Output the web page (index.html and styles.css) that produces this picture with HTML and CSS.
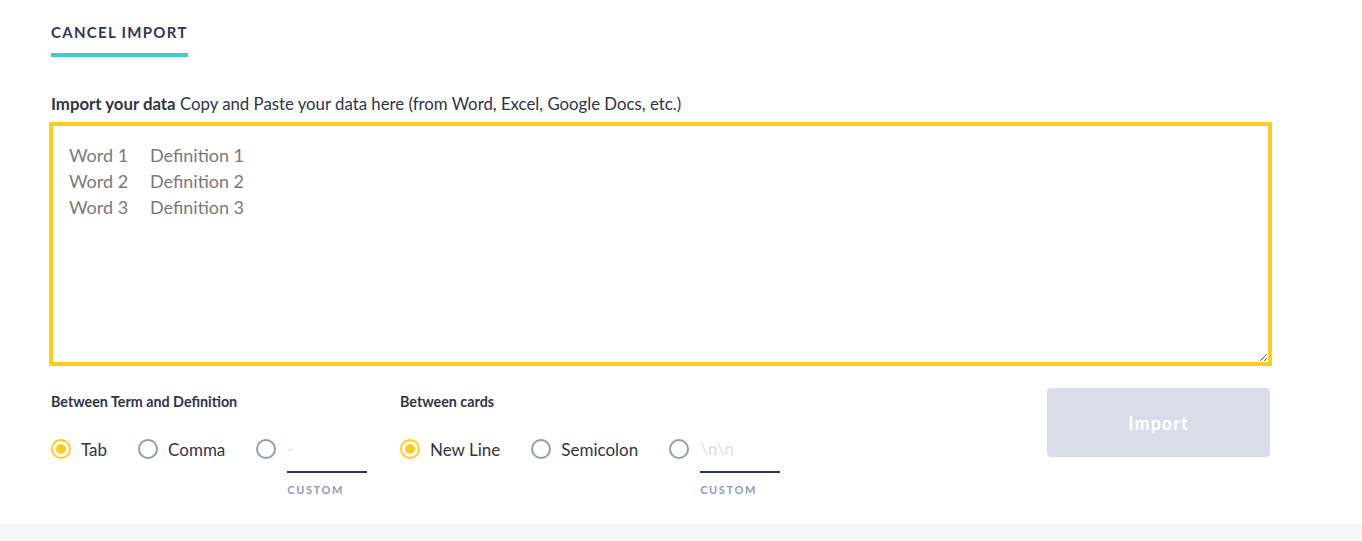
FILE: index.html
```html
<!DOCTYPE html>
<html lang="en">
<head>
<meta charset="utf-8">
<title>Import</title>
<link rel="stylesheet" href="styles.css">
</head>
<body>
<div class="page">
  <main class="panel">
    <div class="tabs">
      <a class="tab-link">CANCEL IMPORT</a>
    </div>
    <label class="intro" for="data"><strong>Import your data</strong> Copy and Paste your data here (from Word, Excel, Google Docs, etc.)</label>
    <textarea id="data" class="data-box" placeholder="Word 1&#9;Definition 1&#10;Word 2&#9;Definition 2&#10;Word 3&#9;Definition 3"></textarea>

    <div class="options">
      <div class="group group-term">
        <div class="group-title">Between Term and Definition</div>
        <div class="choices">
          <label class="choice"><span class="radio checked"></span><span class="choice-text">Tab</span></label>
          <label class="choice"><span class="radio"></span><span class="choice-text">Comma</span></label>
          <div class="choice custom-choice">
            <span class="radio"></span>
            <div class="custom">
              <input class="custom-input" type="text" placeholder="-">
              <span class="custom-label">CUSTOM</span>
            </div>
          </div>
        </div>
      </div>
      <div class="group group-cards">
        <div class="group-title">Between cards</div>
        <div class="choices">
          <label class="choice"><span class="radio checked"></span><span class="choice-text">New Line</span></label>
          <label class="choice"><span class="radio"></span><span class="choice-text">Semicolon</span></label>
          <div class="choice custom-choice">
            <span class="radio"></span>
            <div class="custom">
              <input class="custom-input" type="text" placeholder="\n\n">
              <span class="custom-label">CUSTOM</span>
            </div>
          </div>
        </div>
      </div>
      <div class="actions">
        <button class="import-btn" type="button" disabled>Import</button>
      </div>
    </div>
  </main>
  <footer class="footer"></footer>
</div>
</body>
</html>
```

FILE: styles.css
```css
* { box-sizing: border-box; }
html, body {
  margin: 0;
  padding: 0;
  background: #ffffff;
  font-family: "Lato", "Noto Sans", sans-serif;
  color: #2e3856;
}
.page {
  min-height: 541px;
  display: flex;
  flex-direction: column;
}
.panel {
  padding: 22px 92px 26px 51px;
  background: #ffffff;
}
.footer {
  flex: 1;
  background: #f6f7fb;
}
.tabs {
  display: flex;
}
.tab-link {
  font-size: 15px;
  line-height: 20px;
  font-weight: 700;
  letter-spacing: 1.3px;
  color: #2e3856;
  padding-bottom: 11px;
  border-bottom: 4px solid #3ccfcf;
}
.intro {
  display: block;
  margin-top: 35px;
  font-size: 16.8px;
  line-height: 24px;
  color: #303545;
}
.intro strong { font-weight: 700; }
.data-box {
  display: block;
  width: 100%;
  height: 240px;
  margin-top: 8px;
  border: 2px solid #ffcd1f;
  box-shadow: 0 0 0 2px #ffcd1f;
  border-radius: 0;
  outline: none;
  padding: 16px;
  font-family: "Lato", "Noto Sans", sans-serif;
  font-size: 18px;
  line-height: 26px;
  color: #303545;
  tab-size: 81px;
  -moz-tab-size: 81px;
  resize: vertical;
  background: #fff;
}
.data-box::placeholder {
  color: #7a7a7a;
  opacity: 1;
}
.options {
  display: flex;
  margin-top: 24px;
}
.group-term { width: 349px; }
.group-cards { width: 400px; }
.group-title {
  font-size: 14.3px;
  line-height: 28px;
  font-weight: 700;
  color: #303545;
}
.choices {
  display: flex;
  gap: 31px;
  margin-top: 9px;
}
.choice {
  display: flex;
  align-items: center;
  gap: 10px;
  height: 48px;
}
.custom-choice {
  align-items: flex-start;
  height: auto;
  gap: 11px;
}
.custom-choice .radio { margin-top: 14px; }
.radio {
  width: 20px;
  height: 20px;
  border-radius: 50%;
  border: 2px solid #939bb4;
  display: flex;
  align-items: center;
  justify-content: center;
  flex-shrink: 0;
}
.radio.checked { border-color: #ffcd1f; }
.radio.checked::after {
  content: "";
  width: 10px;
  height: 10px;
  border-radius: 50%;
  background: #ffcd1f;
}
.choice-text {
  font-size: 17px;
  color: #303545;
}
.custom {
  display: flex;
  flex-direction: column;
}
.custom-input {
  width: 80px;
  height: 48px;
  border: none;
  border-bottom: 2px solid #2e3856;
  outline: none;
  padding: 0;
  font-family: "Lato", "Noto Sans", sans-serif;
  font-size: 17px;
  color: #303545;
  background: transparent;
}
.custom-input::placeholder { color: #d9dde8; opacity: 1; }
.custom-label {
  margin-top: 9px;
  font-size: 11px;
  line-height: 16px;
  font-weight: 700;
  letter-spacing: 1.6px;
  color: #939bb4;
}
.actions {
  margin-left: auto;
}
.import-btn {
  width: 223px;
  height: 69px;
  border: none;
  border-radius: 4px;
  background: #d9dde8;
  color: #ffffff;
  font-family: "Lato", "Noto Sans", sans-serif;
  font-size: 18px;
  font-weight: 700;
  letter-spacing: 1px;
}
```
